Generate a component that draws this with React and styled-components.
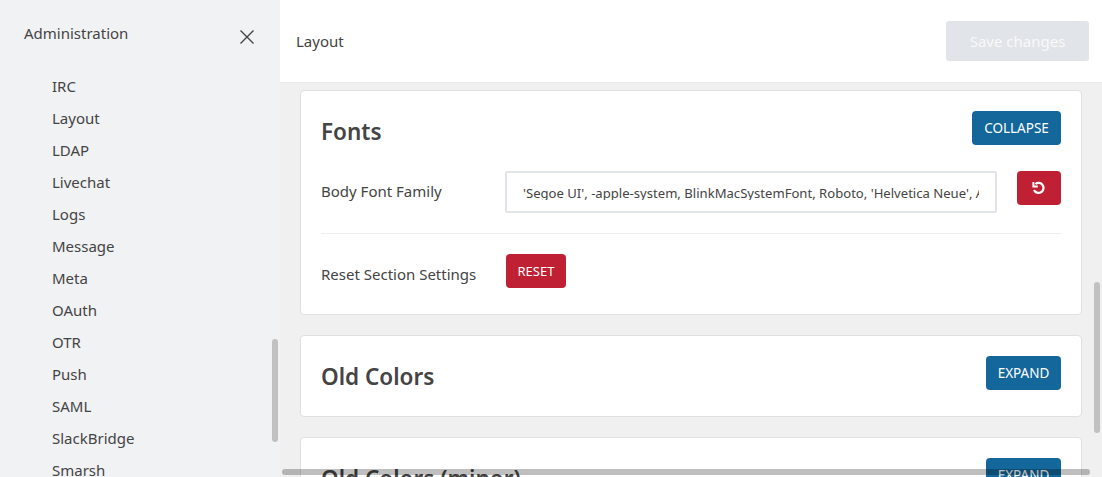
import styled, { createGlobalStyle } from 'styled-components';

const GlobalStyle = createGlobalStyle`
    html, body {
        margin: 0;
        height: 100%;
        overflow: hidden;
    }
    body {
        font-family: 'Noto Sans', 'Open Sans', sans-serif;
        color: #444;
    }
    * {
        box-sizing: border-box;
    }
`;

const navItems = ['IRC', 'Layout', 'LDAP', 'Livechat', 'Logs', 'Message', 'Meta', 'OAuth', 'OTR', 'Push', 'SAML', 'SlackBridge', 'Smarsh'];

const App = () => {
    return (
        <PageStyled>
            <GlobalStyle />
            <SidebarStyled>
                <SidebarHeaderStyled>
                    <SidebarTitleStyled>Administration</SidebarTitleStyled>
                    <CloseIconStyled viewBox="0 0 14 14">
                        <path d="M0.5 0.5 L13.5 13.5 M13.5 0.5 L0.5 13.5" />
                    </CloseIconStyled>
                </SidebarHeaderStyled>
                <NavListStyled>
                    {navItems.map((item) => (
                        <NavItemStyled key={item}>{item}</NavItemStyled>
                    ))}
                </NavListStyled>
                <SidebarThumbStyled />
            </SidebarStyled>
            <MainStyled>
                <TopBarStyled>
                    <TopBarTitleStyled>Layout</TopBarTitleStyled>
                    <SaveButtonStyled>Save changes</SaveButtonStyled>
                </TopBarStyled>
                <ContentStyled>
                    <CardStyled>
                        <CardHeaderStyled>
                            <CardTitleStyled>Fonts</CardTitleStyled>
                            <ActionButtonStyled $width={89}>COLLAPSE</ActionButtonStyled>
                        </CardHeaderStyled>
                        <FontRowStyled>
                            <RowLabelStyled $width={184} $lineHeight={40}>Body Font Family</RowLabelStyled>
                            <FontFieldStyled>
                                <FontValueStyled>'Segoe UI', -apple-system, BlinkMacSystemFont, Roboto, 'Helvetica Neue', Arial, sans-serif</FontValueStyled>
                            </FontFieldStyled>
                            <UndoButtonStyled aria-label="Reset">
                                <svg viewBox="0 0 14 14" width="14" height="14" fill="none" stroke="#fff" strokeWidth="2.2">
                                    <path d="M3.4 3 A5 5 0 1 1 2 9" />
                                    <path d="M1.4 1 V5.4 H5.8" strokeWidth="2" />
                                </svg>
                            </UndoButtonStyled>
                        </FontRowStyled>
                        <ResetRowStyled>
                            <RowLabelStyled $width={185} $lineHeight={40}>Reset Section Settings</RowLabelStyled>
                            <ResetButtonStyled>RESET</ResetButtonStyled>
                        </ResetRowStyled>
                    </CardStyled>
                    <CardStyled>
                        <CardHeaderStyled>
                            <CardTitleStyled>Old Colors</CardTitleStyled>
                            <ActionButtonStyled $width={75}>EXPAND</ActionButtonStyled>
                        </CardHeaderStyled>
                    </CardStyled>
                    <CardStyled>
                        <CardHeaderStyled>
                            <CardTitleStyled>Old Colors (minor)</CardTitleStyled>
                            <ActionButtonStyled $width={75}>EXPAND</ActionButtonStyled>
                        </CardHeaderStyled>
                    </CardStyled>
                </ContentStyled>
                <VerticalThumbStyled />
                <HorizontalThumbStyled />
            </MainStyled>
        </PageStyled>
    );
};

export default App;

const PageStyled = styled.div`
    display: flex;
    width: 1102px;
    height: 477px;
    overflow: hidden;
    background-color: #f0f0f0;
`;

const SidebarStyled = styled.aside`
    position: relative;
    flex: 0 0 280px;
    height: 100%;
    overflow: hidden;
    background-color: #f1f2f4;
`;

const SidebarHeaderStyled = styled.div`
    display: flex;
    align-items: flex-start;
    justify-content: space-between;
    height: 70px;
    padding: 23px 26px 0 24px;
`;

const SidebarTitleStyled = styled.div`
    font-size: 15px;
    line-height: 20px;
    color: #444;
`;

const CloseIconStyled = styled.svg`
    width: 14px;
    height: 14px;
    margin-top: 7px;
    fill: none;
    stroke: #444;
    stroke-width: 1.4;
`;

const NavListStyled = styled.nav`
    display: flex;
    flex-direction: column;
    padding-left: 52px;
`;

const NavItemStyled = styled.div`
    height: 32px;
    font-size: 15px;
    line-height: 32px;
    color: #444;
`;

const SidebarThumbStyled = styled.div`
    position: absolute;
    top: 339px;
    left: 272px;
    width: 6px;
    height: 103px;
    border-radius: 3px;
    background-color: #c1c1c1;
`;

const MainStyled = styled.main`
    position: relative;
    display: flex;
    flex: 1;
    flex-direction: column;
    min-width: 0;
    height: 100%;
`;

const TopBarStyled = styled.header`
    display: flex;
    flex: 0 0 83px;
    align-items: center;
    justify-content: space-between;
    padding: 0 13px 0 16px;
    background-color: #fff;
    border-bottom: 1px solid #e8e8e8;
`;

const TopBarTitleStyled = styled.div`
    font-size: 15px;
    color: #444;
`;

const SaveButtonStyled = styled.button`
    width: 143px;
    height: 40px;
    padding: 0;
    border: none;
    border-radius: 3px;
    font-family: inherit;
    font-size: 15px;
    color: #f8f9fa;
    background-color: #e1e4e8;
`;

const ContentStyled = styled.div`
    display: flex;
    flex-direction: column;
    gap: 20px;
    width: 822px;
    padding: 7px 20px 0;
    overflow: hidden;
`;

const CardStyled = styled.section`
    flex: none;
    padding: 20px 20px 26px;
    background-color: #fff;
    border: 1px solid #e0e0e0;
    border-radius: 4px;
`;

const CardHeaderStyled = styled.div`
    display: flex;
    align-items: center;
    justify-content: space-between;
    height: 34px;
`;

const CardTitleStyled = styled.h2`
    margin: 0;
    padding-top: 6px;
    font-size: 22.5px;
    font-weight: 600;
    color: #444;
`;

const ActionButtonStyled = styled.button`
    width: ${(props) => props.$width}px;
    height: 34px;
    padding: 0;
    border: none;
    border-radius: 4px;
    font-family: inherit;
    font-size: 13.5px;
    color: #fff;
    background-color: #13679a;
`;

const FontRowStyled = styled.div`
    display: flex;
    align-items: flex-start;
    margin-top: 26px;
    padding-bottom: 20px;
    border-bottom: 1px solid #eee;
`;

const RowLabelStyled = styled.div`
    flex: 0 0 ${(props) => props.$width}px;
    font-size: 15px;
    line-height: ${(props) => props.$lineHeight}px;
    color: #444;
`;

const FontFieldStyled = styled.div`
    flex: 0 0 492px;
    min-width: 0;
    height: 42px;
    padding: 10px 16px 0;
    background-color: #fff;
    border: 2px solid #e1e4e8;
    border-radius: 2px;
`;

const FontValueStyled = styled.div`
    height: 17px;
    overflow: hidden;
    font-size: 13.1px;
    line-height: 20px;
    white-space: nowrap;
    color: #444;
`;

const UndoButtonStyled = styled.button`
    display: flex;
    flex: none;
    align-items: center;
    justify-content: center;
    width: 44px;
    height: 34px;
    margin-left: 20px;
    padding: 0;
    border: none;
    border-radius: 4px;
    background-color: #bf2033;
`;

const ResetRowStyled = styled.div`
    display: flex;
    align-items: flex-start;
    height: 34px;
    margin-top: 20px;
`;

const ResetButtonStyled = styled.button`
    width: 60px;
    height: 34px;
    padding: 0;
    border: none;
    border-radius: 4px;
    font-family: inherit;
    font-size: 13px;
    color: #fff;
    background-color: #bf2033;
`;

const VerticalThumbStyled = styled.div`
    position: absolute;
    top: 282px;
    right: 2px;
    width: 6px;
    height: 151px;
    border-radius: 3px;
    background-color: #c1c1c1;
`;

const HorizontalThumbStyled = styled.div`
    position: absolute;
    bottom: 2px;
    left: 2px;
    width: 808px;
    height: 6px;
    border-radius: 3px;
    background-color: rgba(0, 0, 0, 0.25);
`;
